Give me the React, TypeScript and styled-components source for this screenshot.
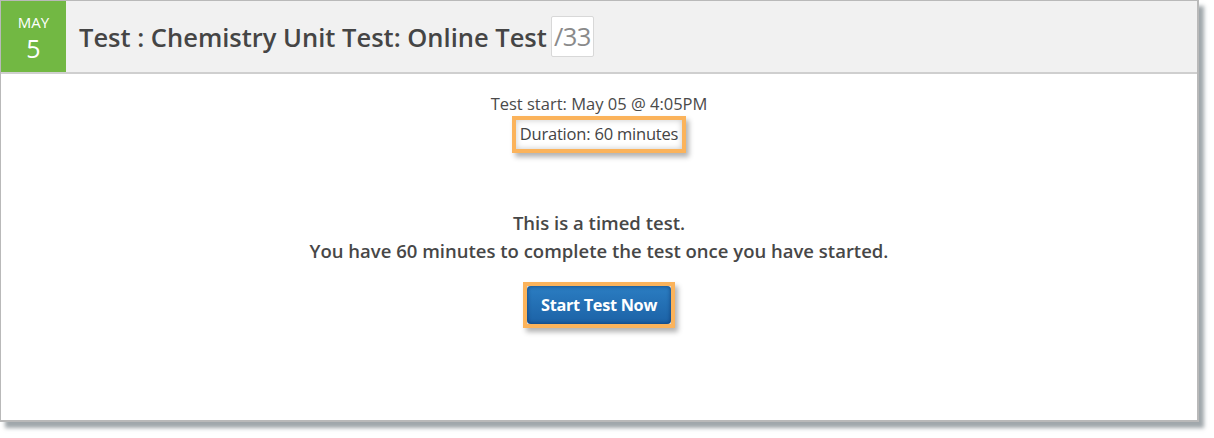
import styled, { createGlobalStyle } from "styled-components";

// ==================== TestCard =================
// 타임드 테스트 시작 화면 (스크린샷 재현)

const GlobalStyle = createGlobalStyle`
  html, body {
    margin: 0;
    padding: 0;
    background: #ffffff;
  }
  body {
    font-family: "Open Sans", "Liberation Sans", sans-serif;
  }
`;

const App = () => {
  return (
    <>
      <GlobalStyle />
      <Page>
        <Card>
          <Header>
            <DateBlock>
              <span className="month">{test.month}</span>
              <span className="day">{test.day}</span>
            </DateBlock>
            <Title>
              {test.title}
              <Score>/{test.total}</Score>
            </Title>
          </Header>
          <Body>
            <Meta>Test start: {test.start}</Meta>
            <Highlight>
              <Meta>Duration: {test.duration} minutes</Meta>
            </Highlight>
            <Notice>
              <p>This is a timed test.</p>
              <p>
                You have {test.duration} minutes to complete the test once you
                have started.
              </p>
            </Notice>
            <Highlight $tight>
              <StartButton type="button">Start Test Now</StartButton>
            </Highlight>
          </Body>
        </Card>
      </Page>
    </>
  );
};

export default App;

const Page = styled.div`
  width: 1214px;
  height: 438px;
  box-sizing: border-box;
  padding: 0 15px 16px 0;
`;

const Card = styled.div`
  width: 1199px;
  height: 422px;
  box-sizing: border-box;
  border: 1px solid #b9b9b9;
  border-right-width: 2px;
  border-bottom-width: 2px;
  background: #fff;
  box-shadow: 5px 6px 4px rgba(120, 130, 135, 0.7);
  display: flex;
  flex-direction: column;
`;

const Header = styled.div`
  height: 73px;
  box-sizing: border-box;
  display: flex;
  align-items: stretch;
  background: #f1f1f1;
  border-bottom: 2px solid #cfcfcf;
`;

const DateBlock = styled.div`
  width: 65px;
  background: #72b843;
  color: #fff;
  display: flex;
  flex-direction: column;
  align-items: center;
  justify-content: center;
  line-height: 1;

  .month {
    font-size: 15px;
    margin-top: 2px;
  }
  .day {
    font-size: 25px;
    margin-top: 6px;
  }
`;

const Title = styled.h1`
  margin: 0 0 0 13px;
  display: flex;
  align-items: center;
  font-size: 25.5px;
  font-weight: 600;
  color: #454545;
`;

const Score = styled.span`
  margin-left: 4px;
  padding: 2px 2px 3px;
  background: #fff;
  border: 1px solid #d8d8d8;
  border-radius: 2px;
  font-weight: 400;
  letter-spacing: -0.5px;
  color: #8a8a8a;
`;

const Body = styled.div`
  flex: 1;
  display: flex;
  flex-direction: column;
  align-items: center;
  padding-top: 18px;
`;

const Meta = styled.div`
  font-size: 16.5px;
  line-height: 23px;
  color: #4a4a4a;
`;

// 주황 테두리 강조 박스
const Highlight = styled.div<{ $tight?: boolean }>`
  margin-top: ${(p) => (p.$tight ? "0" : "1px")};
  padding: ${(p) => (p.$tight ? "0" : "2px 4px 4px")};
  border: 4px solid #fbb35b;
  background: #fff;
  box-shadow: inset 0 0 6px rgba(0, 0, 0, 0.22), 3px 4px 5px rgba(0, 0, 0, 0.3);

  ${Meta} {
    color: #444;
    letter-spacing: -0.2px;
  }
`;

const Notice = styled.div`
  margin: 56px 0 17px;
  text-align: center;
  font-size: 18.5px;
  font-weight: 600;
  line-height: 28px;
  color: #474747;

  p {
    margin: 0;
  }
`;

const StartButton = styled.button`
  display: block;
  height: 38px;
  padding: 0 14px;
  border: none;
  border-radius: 4px;
  background: linear-gradient(#2b7dc2, #1c62a6);
  box-shadow: inset 0 0 4px rgba(0, 20, 60, 0.55);
  font-family: "Open Sans", "Liberation Sans", sans-serif;
  font-size: 16.3px;
  font-weight: 700;
  letter-spacing: -0.3px;
  color: #fff;
  cursor: pointer;
`;

//  ============ 더미데이터 ===================

const test = {
  month: "MAY",
  day: "5",
  title: "Test : Chemistry Unit Test: Online Test",
  total: 33,
  start: "May 05 @ 4:05PM",
  duration: 60,
};
